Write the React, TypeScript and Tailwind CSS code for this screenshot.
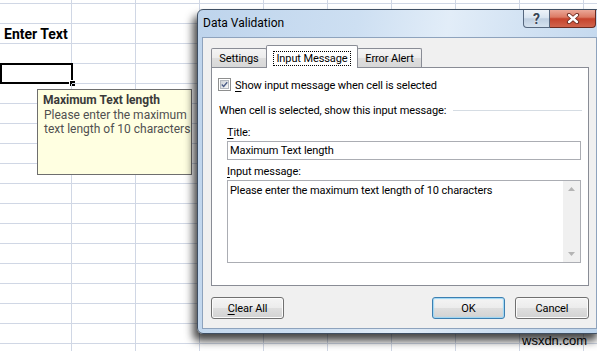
import React from "react";

const ui = "font-[family-name:Roboto,'Liberation_Sans',sans-serif]";
const btnBg =
  "bg-[linear-gradient(to_bottom,#f4f4f4_0%,#ececec_48%,#dedede_52%,#d2d2d2_100%)]";
const tabBg =
  "bg-[linear-gradient(to_bottom,#f4f4f4_0%,#ececec_50%,#dedede_52%,#d8d8d8_100%)]";

function Check() {
  return (
    <span className="flex h-[13px] w-[13px] items-center justify-center border border-[#8e8f8f] bg-white p-px">
      <span className="flex h-full w-full items-center justify-center border border-[#b3b8bf] bg-[linear-gradient(135deg,#cdd2d8,#f7f7f7)]">
        <svg width="9" height="9" viewBox="0 0 9 9">
          <path d="M1 4.6 L3.4 7 L8 1.6" fill="none" stroke="#4a5d87" strokeWidth="1.7" />
        </svg>
      </span>
    </span>
  );
}

function Button({ children, def, w }: { children: React.ReactNode; def?: boolean; w: string }) {
  return (
    <div
      className={`flex h-[22px] ${w} items-center justify-center rounded-[3px] border text-[11px] leading-[15px] text-black ${btnBg} ${
        def ? "border-[#3c7fb1] shadow-[inset_0_0_1px_1px_#9bd6f5]" : "border-[#707070] shadow-[inset_0_0_0_1px_#fbfbfb]"
      }`}
    >
      {children}
    </div>
  );
}

export default function App() {
  const cells: [number, number][] = [];
  for (let r = 0; r < 19; r++) for (let c = 0; c < 10; c++) cells.push([r, c]);

  return (
    <div className={`relative h-[351px] w-[597px] overflow-hidden bg-white ${ui}`}>
      {/* spreadsheet grid */}
      <div className="grid grid-cols-[72px_repeat(9,64px)] grid-rows-[4px_repeat(18,20px)]">
        {cells.map(([r, c]) => (
          <div key={`${r}-${c}`} className="relative border-b border-r border-[#d0d7e5]">
            {r === 2 && c === 0 && (
              <span className="flex h-full items-center whitespace-nowrap pl-[4px] pt-[1px] text-[14px] font-bold leading-none text-black">
                Enter Text
              </span>
            )}
            {r === 4 && c === 0 && (
              <div className="absolute -top-px left-0 h-[21px] w-[73px] border-2 border-black">
                <div className="absolute bottom-[-5px] right-[-5px] h-[7px] w-[7px] border border-white bg-black" />
              </div>
            )}
          </div>
        ))}
      </div>

      {/* input message tooltip */}
      <div className="absolute left-[37px] top-[89px] h-[86px] w-[155px] border border-[#6e6e6e] bg-[#ffffe1] pl-[5px] pt-[3px] text-[12px] leading-[14.5px] text-[#505050]">
        <div className="font-bold text-[#3a3a3a]">Maximum Text length</div>
        <div className="pl-px">Please enter the maximum</div>
        <div className="pl-px">text length of 10 characters</div>
      </div>

      {/* dialog */}
      <div className="absolute left-[197px] top-[9px] flex h-[325px] w-[405px] flex-col rounded-[6px] border border-[#3f4f63] bg-[linear-gradient(100deg,#bed4ec_0%,#cddff2_35%,#e2edf8_55%,#cfe0f2_75%,#bcd3eb_100%)] px-[4px] pb-[4px] shadow-[-4px_7px_9px_rgba(0,0,0,0.72)]">
        <div className="flex h-[27px] items-start justify-between">
          <span className="pl-px pt-[6px] text-[12px] leading-[15px] text-black">Data Validation</span>
          <div className="mr-px flex">
            <div className="flex h-[18px] w-[27px] items-center justify-center rounded-bl-[4px] border border-t-0 border-[#56677e] bg-[linear-gradient(to_bottom,#eef3f9_0%,#d9e4f0_45%,#bfcfe1_52%,#d5e2ef_100%)] text-[14px] font-bold leading-none text-[#3a4656] [text-shadow:0_0_2px_#ffffff]">
              ?
            </div>
            <div className="flex h-[18px] w-[46px] items-center justify-center rounded-br-[4px] border border-l-0 border-t-0 border-[#6a2a20] bg-[linear-gradient(to_bottom,#eba898_0%,#dc7a64_42%,#c6432c_52%,#d0644d_100%)]">
              <svg width="14" height="11" viewBox="0 0 14 11">
                <path d="M3 2 L11 9 M11 2 L3 9" stroke="#6b2a20" strokeWidth="4.2" strokeLinecap="round" />
                <path d="M3 2 L11 9 M11 2 L3 9" stroke="#ffffff" strokeWidth="2.4" strokeLinecap="round" />
              </svg>
            </div>
          </div>
        </div>

        <div className="flex flex-1 flex-col border border-[#8ea3bd] bg-[#f0f0f0] pl-[8px] pt-[7px] text-[11px] leading-[15px] tracking-[-0.1px] text-black">
          {/* tabs */}
          <div className="flex h-[22px] items-end">
            <div className={`flex h-[19px] w-[56px] items-center justify-center rounded-t-[2px] border border-b-0 border-[#898c95] pt-px ${tabBg}`}>
              Settings
            </div>
            <div className="relative z-10 -mb-px -ml-px flex h-[23px] w-[92px] items-center justify-center rounded-t-[2px] border border-b-0 border-[#898c95] bg-white pt-[2px]">
              <span className="border border-dotted border-black px-[2px] leading-[13px]">Input Message</span>
            </div>
            <div className={`-ml-px flex h-[19px] w-[65px] items-center justify-center rounded-t-[2px] border border-b-0 border-[#898c95] pt-px ${tabBg}`}>
              Error Alert
            </div>
          </div>

          {/* panel */}
          <div className="flex h-[219px] w-[378px] flex-col border border-[#898c95] bg-white">
            <div className="ml-[6px] mt-[10px] flex h-[13px] items-center gap-[4px]">
              <Check />
              <span className="pt-px">
                <u className="underline-offset-2">S</u>how input message when cell is selected
              </span>
            </div>
            <div className="ml-[7px] mt-[12px] flex h-[15px] items-center">
              <span className="whitespace-nowrap">When cell is selected, show this input message:</span>
              <div className="ml-[7px] mr-[6px] h-px flex-1 bg-[#d5dce3]" />
            </div>
            <div className="ml-[15px] mt-[7px] h-[15px]">
              <u className="underline-offset-2">T</u>itle:
            </div>
            <div className="ml-[15px] mt-px flex h-[19px] w-[354px] items-center border border-[#abadb3] bg-white pl-[2px]">
              Maximum Text length
            </div>
            <div className="ml-[15px] mt-[4px] h-[15px]">
              <u className="underline-offset-2">I</u>nput message:
            </div>
            <div className="ml-[15px] mt-px flex h-[83px] w-[354px] border border-[#abadb3] bg-white">
              <div className="flex-1 pl-[2px] pt-[2px]">Please enter the maximum text length of 10 characters</div>
              <div className="flex w-[17px] flex-col items-center justify-between bg-[#f0f0f0] py-[6px]">
                <svg width="7" height="4" viewBox="0 0 7 4">
                  <path d="M0 4 L3.5 0 L7 4 Z" fill="#b4b4b4" />
                </svg>
                <svg width="7" height="4" viewBox="0 0 7 4">
                  <path d="M0 0 L3.5 4 L7 0 Z" fill="#b4b4b4" />
                </svg>
              </div>
            </div>
          </div>

          {/* buttons */}
          <div className="mt-[11px] flex w-[378px]">
            <Button w="w-[73px]">
              <span>
                <u className="underline-offset-2">C</u>lear All
              </span>
            </Button>
            <div className="ml-auto flex gap-[10px]">
              <Button w="w-[73px]" def>
                OK
              </Button>
              <Button w="w-[74px]">Cancel</Button>
            </div>
          </div>
        </div>
      </div>

      {/* watermark */}
      <div className="absolute left-[522px] top-[333px] font-[family-name:'Liberation_Sans',Arial,sans-serif] text-[13px] leading-[15px] text-black">
        wsxdn.com
      </div>
    </div>
  );
}
